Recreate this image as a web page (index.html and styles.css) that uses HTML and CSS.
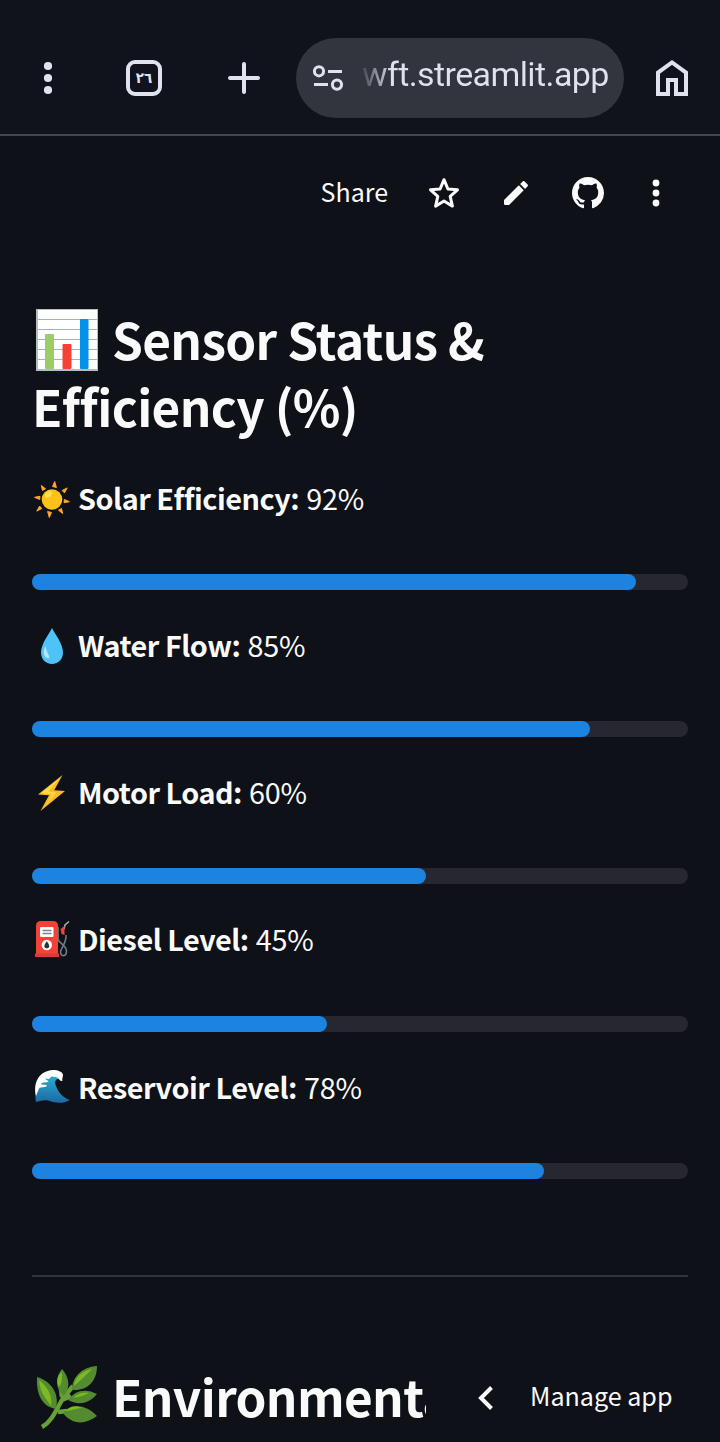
FILE: index.html
```html
<!DOCTYPE html>
<html lang="en">
<head>
<meta charset="utf-8">
<title>Sensor Status</title>
<link rel="stylesheet" href="styles.css">
</head>
<body>
<header class="browser">
  <svg class="icon" viewBox="0 0 48 48" fill="currentColor"><circle cx="24" cy="12" r="4.1"/><circle cx="24" cy="24" r="4.1"/><circle cx="24" cy="36" r="4.1"/></svg>
  <div class="tabs"><span>&#x202D;٢٦</span></div>
  <svg class="icon plus" viewBox="0 0 48 48" fill="none" stroke="currentColor" stroke-width="4" stroke-linecap="round"><path d="M24 10v28M10 24h28"/></svg>
  <div class="address">
    <svg class="tune" viewBox="0 0 32 32" fill="none" stroke="currentColor" stroke-width="3"><circle cx="7" cy="9.3" r="4.6"/><path d="M16 9.5h14M2 22.5h14"/><circle cx="25" cy="22.6" r="4.6"/></svg>
    <span class="url">wft.streamlit.app</span>
  </div>
  <svg class="icon home" viewBox="0 0 48 48" fill="none" stroke="currentColor" stroke-width="4"><path d="M10 40V18.600L24 8.500l14 10.100V40H28V26h-8v14z"/></svg>
</header>
<nav class="appbar">
  <span class="share">Share</span>
  <svg class="icon star" viewBox="0 0 48 48" fill="none" stroke="currentColor" stroke-width="3" stroke-linejoin="round"><path d="M24 10.700l3.900 9.300 9.600.8-7.300 6.500 2.200 9.800-8.400-5.100-8.400 5.100 2.200-9.800-7.300-6.500 9.600-.8z"/></svg>
  <svg class="icon pencil" viewBox="-6 -6 36 36" fill="currentColor"><path d="M3 17.200V20q0 1 1 1h2.800L17.800 9.900l-3.700-3.700zM20.700 7c.4-.4.4-1 0-1.400l-2.300-2.300c-.4-.4-1-.4-1.400 0l-1.900 1.900L18.800 9z"/></svg>
  <svg class="icon github" viewBox="-4 -4 24 24" fill="currentColor"><path d="M8 0C3.580 0 0 3.580 0 8c0 3.540 2.290 6.530 5.470 7.590.4.07.55-.17.55-.38 0-.19-.01-.82-.01-1.490-2.010.37-2.530-.49-2.690-.94-.09-.23-.48-.94-.82-1.130-.28-.15-.68-.52-.01-.53.63-.01 1.080.58 1.230.82.72 1.210 1.870.87 2.330.66.07-.52.28-.87.51-1.070-1.780-.2-3.640-.89-3.640-3.950 0-.87.31-1.590.82-2.150-.08-.2-.36-1.020.08-2.120 0 0 .67-.21 2.200.82.64-.18 1.320-.27 2-.27s1.360.09 2 .27c1.530-1.040 2.200-.82 2.200-.82.44 1.100.16 1.920.08 2.120.51.56.82 1.270.82 2.150 0 3.070-1.870 3.750-3.650 3.950.29.25.54.73.54 1.480 0 1.070-.01 1.930-.01 2.200 0 .21.15.46.55.38A8.010 8.010 0 0 0 16 8c0-4.420-3.580-8-8-8z"/></svg>
  <svg class="icon dots" viewBox="0 0 48 48" fill="currentColor"><circle cx="24" cy="14" r="3.4"/><circle cx="24" cy="24" r="3.4"/><circle cx="24" cy="34" r="3.4"/></svg>
</nav>
<main class="content">
  <h2 class="heading">
    <span class="heading-line"><svg class="emoji-lg" viewBox="0 0 70 70"><path fill="#b0bec5" d="M4 4h62v62H4z"/><path fill="#fff" d="M6 5h59v59H6z"/><path stroke="#a5b2b9" stroke-width="1" d="M6 14.500h59M6 24.500h59M6 34.500h59M6 44.500h59M6 54.500h59"/><rect x="13" y="29" width="9" height="35" rx="1" fill="#9ccc65"/><rect x="30.500" y="39" width="9" height="25" rx="1" fill="#f44336"/><rect x="48" y="14" width="8.500" height="50" rx="1" fill="#0491eb"/></svg><span>Sensor Status &amp;</span></span>
    <span class="heading-line">Efficiency (%)</span>
  </h2>
  <section class="metric">
    <p class="label"><svg class="emoji" viewBox="0 0 40 40"><g fill="#ffa726" stroke="#ffa726" stroke-width="1" stroke-linejoin="round"><g id="rays"><path d="M20.500 7.500l2.200-5 1.700 6z"/><path d="M30.200 11.500l5-2.600-2.800 5z"/><path d="M32.400 20.500l5 2.200-5.400 1z"/><path d="M29.500 29.500l1.200 5-4.200-3.300z"/></g><use href="#rays" transform="rotate(180 20 20.500)"/></g><circle cx="20" cy="20.500" r="10.300" fill="#ffc21a"/><ellipse cx="16.500" cy="15.500" rx="4" ry="2.500" transform="rotate(-40 16.500 15.500)" fill="#ffe04a"/></svg><b>Solar Efficiency:</b><span class="value">92%</span></p>
    <div class="track"><div class="fill" style="width:92%"></div></div>
  </section>
  <section class="metric">
    <p class="label"><svg class="emoji" viewBox="0 0 40 40"><path fill="#4fc3f7" d="M20 2C17 8 9 18 9 26.500C9 33 13.500 38 20 38s11-5 11-11.500C31 18 23 8 20 2z"/><path fill="#b3e5fc" d="M13.500 20c-2.500 4-2.500 9 .5 11.500 1.500 1 3.500 1.400 3.200-.5-.5-3.500-3-5.500-3.700-11z"/></svg><b>Water Flow:</b><span class="value">85%</span></p>
    <div class="track"><div class="fill" style="width:85%"></div></div>
  </section>
  <section class="metric">
    <p class="label"><svg class="emoji" viewBox="0 0 40 40"><path fill="#fdb92a" d="M30.500 2L6 21.500l11 .8L8.500 38 33 18l-10.800-.8z"/><path fill="#ffdf43" d="M28 5L9 20.300l11.500.7L14 32l10-12.500-8-1z"/></svg><b>Motor Load:</b><span class="value">60%</span></p>
    <div class="track"><div class="fill" style="width:60%"></div></div>
  </section>
  <section class="metric">
    <p class="label"><svg class="emoji pump" viewBox="0 0 40 40"><path fill="none" stroke="#717d84" stroke-width="1.600" d="M26 8v12c0 4 8 5 8.500 12 0 6-6 6-6 1 0-4 6-8 5.500-17"/><path fill="none" stroke="#a7b0b5" stroke-width="1.500" d="M32 10l1-4 4-3.500"/><path fill="#f44336" d="M28.500 10l4-3v9l-3-1zM4 7q0-5 5-5h12q5 0 5 5v28H4z"/><path fill="#d93c36" d="M3 34.500h24V38H3z"/><rect x="8" y="8" width="13.500" height="10" rx="1" fill="#fff"/><path stroke="#78868d" stroke-width="1.300" d="M10.500 11.500h9M10.500 14.500h9"/><circle cx="14.800" cy="26" r="5.200" fill="#fff"/><path fill="#263238" d="M14.800 22.200c-4 5-2.500 7 0 7s4-2 0-7z"/></svg><b>Diesel Level:</b><span class="value">45%</span></p>
    <div class="track"><div class="fill" style="width:45%"></div></div>
  </section>
  <section class="metric">
    <p class="label"><svg class="emoji" viewBox="0 0 40 40"><defs><linearGradient id="sea" x1="0" y1="0" x2="0" y2="1"><stop offset="0" stop-color="#2cb8d5"/><stop offset="1" stop-color="#1b68a5"/></linearGradient></defs><path fill="url(#sea)" d="M4 34C2 20 6 5 21 4l9 2-1 5c-5-1-7 2-5 7 3 8 8 12 14 14-9 5-17 2-22 .5C12 31.500 7 33 4 34z"/><path fill="#fff" d="M4 28C1 16 6 3 21 2c5 0 10 2 10 5 0 2-1 3-.7 6-2.300.5-3-2-5-3.500-2-1-4 0-5.500-1.200L17 11l-4-.4c1 2 3 1.400 3.500 3-2 1.400-6 .4-7.500 2.200 1 1.500 4 .5 6 1.700-2 3-6 .5-8 3z"/></svg><b>Reservoir Level:</b><span class="value">78%</span></p>
    <div class="track"><div class="fill" style="width:78%"></div></div>
  </section>
  <hr class="divider">
  <h2 class="heading">
    <span class="heading-line"><svg class="emoji-lg leaf" viewBox="0 0 70 70"><path fill="none" stroke="#689f38" stroke-width="4.500" d="M10 64C21 58 25 44 32 34l9-11M26 49l9-1M30 37l9-4M30 34l-1-8"/><g fill="#558b2f"><path d="M5 14c13 4 23 15 19 32C12 44 4 34 5 14zM30 6c7 8 9 18 2 27-9-7-9-19-2-27zM65 3c0 14-8 25-25 24C40 14 50 4 65 3zM65 31c-9 11-20 11-29 6 7-10 18-12 29-6zM65 53c-12 9-25 9-34-3 9-10 23-9 34 3z"/></g><path fill="#7cb928" d="M7 17c8 6 14 16 12 26-2-4-4-5-7-10C9 28 8 24 7 17zM30 9c0 7 0 12-3 15-3-6-2-10 3-15zM60 6c-6 6-12 12-18 17 1-9 8-15 18-17zM57 30c-7 3-10 4-16 5 4-4 9-6 16-5zM50 45c-6 0-10 3-17 3 5-5 11-6 17-3z"/></svg><span>Environmental</span></span>
  </h2>
</main>
<button class="manage"><svg class="chevron" viewBox="0 0 20 28" fill="none" stroke="currentColor" stroke-width="4"><path d="M15.500 3.500L5 14l10.500 10.500"/></svg><span class="manage-text">Manage app</span></button>
</body>
</html>
```
FILE: styles.css
```css
* { box-sizing: border-box; }
body {
  margin: 0;
  position: relative;
  width: 720px;
  height: 1442px;
  overflow: hidden;
  background: #0e1117;
  color: #fafafa;
  font-family: "Noto Sans CJK SC", "Noto Sans", sans-serif;
}
svg { display: block; flex: none; }
.icon { width: 48px; height: 48px; }
.browser {
  display: flex;
  align-items: center;
  height: 136px;
  padding: 22px 24px 0;
  background: #10131c;
  border-bottom: 2px solid #44464f;
  color: #e0e2ee;
}
.tabs {
  display: flex;
  align-items: center;
  justify-content: center;
  width: 36px;
  height: 36px;
  margin-left: 54px;
  border: 4px solid currentColor;
  border-radius: 9px;
  font: bold 15px/20px "DejaVu Sans Condensed", "DejaVu Sans", sans-serif;
  font-stretch: condensed;
  letter-spacing: -1px;
}
.plus { margin-left: 58px; }
.address {
  display: flex;
  align-items: center;
  width: 328px;
  height: 80px;
  margin-left: 28px;
  padding-left: 16px;
  border-radius: 40px;
  background: #32353e;
}
.tune { width: 32px; height: 32px; }
.url {
  margin: -9px 0 0 18px;
  font: 34px/48px Roboto, sans-serif;
  letter-spacing: -0.600px;
  white-space: nowrap;
  background: linear-gradient(90deg, #42454e 0, #e0e2ee 30px);
  -webkit-background-clip: text;
  background-clip: text;
  color: transparent;
}
.home { margin-left: 24px; }
.appbar {
  display: flex;
  align-items: center;
  justify-content: flex-end;
  height: 114px;
  padding-right: 40px;
}
.share { margin: -4px 32px 0 0; font-size: 25px; }
.pencil, .github { margin-left: 24px; }
.dots { margin-left: 20px; }
.content { padding: 55px 32px 0; }
.heading {
  margin: 0 0 32.400px;
  font-size: 49.500px;
  font-weight: 700;
  line-height: 67.200px;
  letter-spacing: -0.650px;
}
.heading-line { display: flex; white-space: nowrap; }
.emoji-lg { width: 70px; height: 70px; margin: 0 10px -4px 0; }
.leaf { margin-top: 1px; }
.metric { height: 147.200px; }
.label {
  display: flex;
  align-items: center;
  height: 51.200px;
  margin: 0 0 51.050px;
  font-size: 28.800px;
  line-height: 51.200px;
  white-space: nowrap;
}
.label b { letter-spacing: -0.480px; }
.emoji { width: 40px; height: 40px; margin: 3px 6px 0 0; }
.pump { margin-top: 1px; }
.value { margin-left: 7px; letter-spacing: -0.200px; }
.track { height: 16px; border-radius: 8px; background: #262730; }
.fill { height: 16px; border-radius: 8px; background: #1c83e1; }
.divider { height: 2px; margin: 67.200px 0 85px; border: 0; background: #31333b; }
.manage {
  position: absolute;
  right: 0;
  bottom: 0;
  display: flex;
  align-items: center;
  width: 294px;
  height: 88px;
  padding: 0 0 0 50px;
  border: 0;
  background: #0e1117;
  color: #fafafa;
  font: 25.100px/40px "Noto Sans CJK SC", sans-serif;
}
.chevron { width: 20px; height: 28px; }
.manage-text { margin: -6px 0 0 34px; white-space: nowrap; }
```
